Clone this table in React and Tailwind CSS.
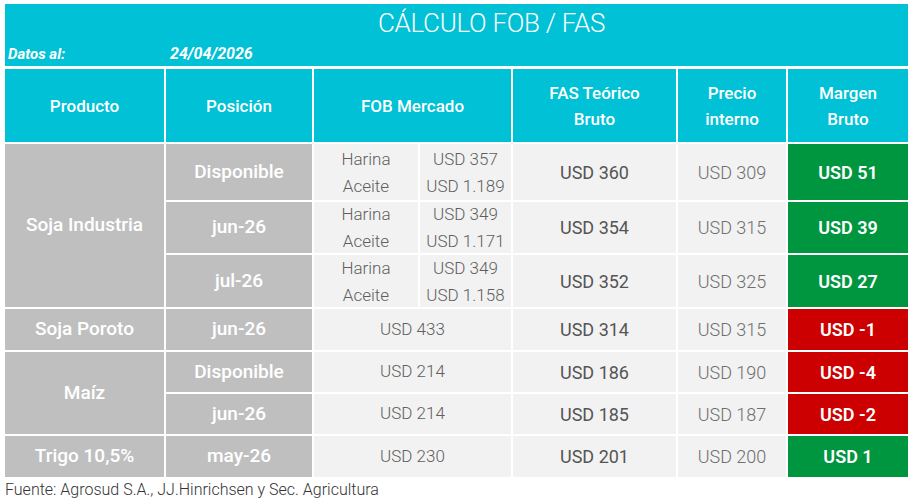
const HEAD = "bg-[#00C1D5] text-white font-medium text-[17px] leading-[26px] flex items-center justify-center text-center";
const PROD = "bg-[#BFBFBF] text-white font-medium text-[19px] flex items-center justify-center";
const POS = "bg-[#BFBFBF] text-white font-medium text-[19px] flex items-center justify-center";
const CELL = "bg-[#F2F2F2] flex items-center justify-center";
const FAS = CELL + " text-[#555555] font-normal text-[18px]";
const PRECIO = CELL + " text-[#6e6e6e] font-light text-[18px]";
const FOB = CELL + " text-[#5f5f5f] font-light text-[17px]";

const rows = [
  { pos: "Disponible", fob: ["USD 357", "USD 1.189"], fas: "USD 360", precio: "USD 309", margen: "USD 51" },
  { pos: "jun-26", fob: ["USD 349", "USD 1.171"], fas: "USD 354", precio: "USD 315", margen: "USD 39" },
  { pos: "jul-26", fob: ["USD 349", "USD 1.158"], fas: "USD 352", precio: "USD 325", margen: "USD 27" },
];

const simple = [
  { prod: "Soja Poroto", span: 1, pos: "jun-26", fob: "USD 433", fas: "USD 314", precio: "USD 315", margen: "USD -1" },
  { prod: "Maíz", span: 2, pos: "Disponible", fob: "USD 214", fas: "USD 186", precio: "USD 190", margen: "USD -4" },
  { prod: null, pos: "jun-26", fob: "USD 214", fas: "USD 185", precio: "USD 187", margen: "USD -2" },
  { prod: "Trigo 10,5%", span: 1, pos: "may-26", fob: "USD 230", fas: "USD 201", precio: "USD 200", margen: "USD 1" },
];

function Margen({ v }) {
  const neg = v.includes("-");
  return (
    <div className={"flex items-center justify-center text-white font-semibold text-[18px] " + (neg ? "bg-[#CC0000]" : "bg-[#009640]")}>
      {v}
    </div>
  );
}

export default function App() {
  return (
    <div className="w-[917px] h-[502px] bg-white pt-[4px] pl-[5px] overflow-hidden" style={{ fontFamily: "Roboto, 'Noto Sans', sans-serif" }}>
      <div className="w-[903px] h-[62px] bg-[#00C1D5] text-white flex flex-col">
        <div className="h-[38px] flex items-center justify-center pl-[70px] text-[26px] font-light tracking-[-0.3px]">
          CÁLCULO FOB / FAS
        </div>
        <div className="flex items-center h-[20px] mt-[2px] text-[15px] font-bold italic">
          <span className="w-[165px] pl-[3px]">Datos al:</span>
          <span className="text-[16px]">24/04/2026</span>
        </div>
      </div>

      <div className="mt-[3px] w-[903px] grid grid-cols-[159px_146px_104px_91px_163px_108px_120px] grid-rows-[73px_56px_51px_52px_41px_40px_40px_41px] gap-[2px]">
        <div className={HEAD}>Producto</div>
        <div className={HEAD}>Posición</div>
        <div className={HEAD + " col-span-2"}>FOB Mercado</div>
        <div className={HEAD}>FAS Teórico<br />Bruto</div>
        <div className={HEAD}>Precio<br />interno</div>
        <div className={HEAD}>Margen<br />Bruto</div>

        {rows.map((r, i) => (
          <>
            {i === 0 && <div key="si" className={PROD + " row-span-3"}>Soja Industria</div>}
            <div key={"p" + i} className={POS}>{r.pos}</div>
            <div key={"n" + i} className={FOB + " flex-col gap-[5px] leading-[22px]"}>
              <span>Harina</span>
              <span>Aceite</span>
            </div>
            <div key={"v" + i} className={FOB + " flex-col gap-[5px] leading-[22px]"}>
              <span>{r.fob[0]}</span>
              <span>{r.fob[1]}</span>
            </div>
            <div key={"f" + i} className={FAS}>{r.fas}</div>
            <div key={"r" + i} className={PRECIO}>{r.precio}</div>
            <Margen key={"m" + i} v={r.margen} />
          </>
        ))}

        {simple.map((r, i) => (
          <>
            {r.prod && (
              <div key={"sp" + i} className={PROD + (r.span === 2 ? " row-span-2" : "")}>{r.prod}</div>
            )}
            <div key={"sq" + i} className={POS}>{r.pos}</div>
            <div key={"sf" + i} className={FOB + " col-span-2"}>{r.fob}</div>
            <div key={"sa" + i} className={FAS}>{r.fas}</div>
            <div key={"sr" + i} className={PRECIO}>{r.precio}</div>
            <Margen key={"sm" + i} v={r.margen} />
          </>
        ))}
      </div>

      <div className="mt-[3px] text-[16px] leading-[20px] font-light text-[#333333]">
        Fuente: Agrosud S.A., JJ.Hinrichsen y Sec. Agricultura
      </div>
    </div>
  );
}
